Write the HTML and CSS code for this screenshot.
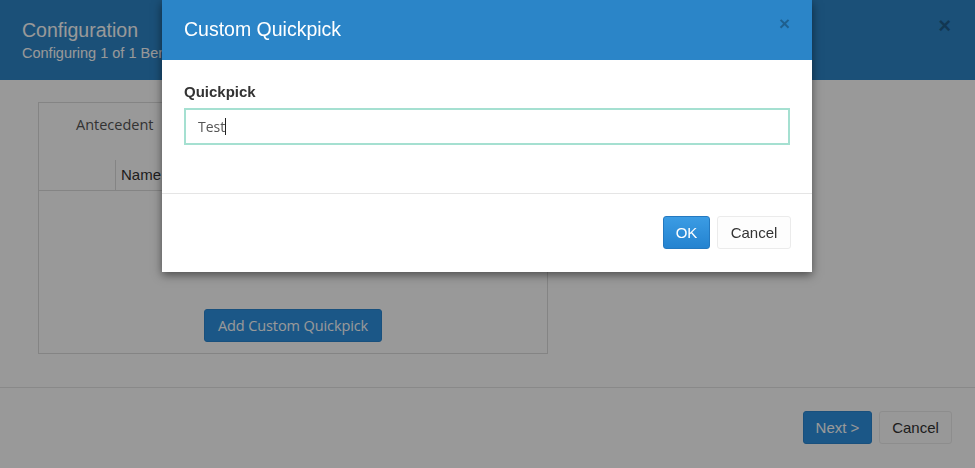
FILE: index.html
```html
<!DOCTYPE html>
<html>
<head>
    <meta charset="utf-8">
    <title>Configuration</title>
    <link rel="stylesheet" href="styles.css">
</head>
<body>
    <div class="page">
        <div class="page-header">
            <div>
                <div class="page-title">Configuration</div>
                <div class="page-subtitle">Configuring 1 of 1 Benefit Rules</div>
            </div>
            <span class="close">&times;</span>
        </div>
        <div class="page-content">
            <div class="panel">
                <div class="panel-tab">Antecedent</div>
                <div class="table-head">
                    <div class="cell-check"></div>
                    <div class="cell-name">Name</div>
                </div>
                <button class="btn btn-primary add-btn">Add Custom Quickpick</button>
            </div>
        </div>
        <div class="page-footer">
            <button class="btn btn-primary btn-next">Next &gt;</button>
            <button class="btn btn-default">Cancel</button>
        </div>
    </div>

    <div class="backdrop"></div>

    <div class="modal">
        <div class="modal-header">
            <span class="modal-title">Custom Quickpick</span>
            <span class="close">&times;</span>
        </div>
        <div class="modal-body">
            <label class="field-label">Quickpick</label>
            <div class="field">Test<span class="caret"></span></div>
        </div>
        <div class="modal-footer">
            <button class="btn btn-ok">OK</button>
            <button class="btn btn-default">Cancel</button>
        </div>
    </div>
</body>
</html>
```

FILE: styles.css
```css
body {
    margin: 0;
    width: 975px;
    height: 468px;
    overflow: hidden;
    background-color: #fff;
    font-family: "Liberation Sans", Arial, sans-serif;
    color: #333;
}
.page {
    display: flex;
    flex-direction: column;
    height: 468px;
}
.page-header {
    height: 80px;
    box-sizing: border-box;
    padding: 18px 22px 0 22px;
    background-color: #2d86c9;
    color: #fff;
    display: flex;
    justify-content: space-between;
    align-items: flex-start;
}
.page-title {
    font-size: 19.5px;
    line-height: 24px;
}
.page-subtitle {
    font-size: 14.5px;
    line-height: 18px;
    margin-top: 2px;
}
.close {
    font-size: 22px;
    font-weight: bold;
    line-height: 16px;
    color: #000;
    opacity: 0.3;
    margin-right: 2px;
}
.page-content {
    padding: 22px 38px 33px 38px;
}
.panel {
    width: 510px;
    height: 252px;
    box-sizing: border-box;
    border: 1px solid #ddd;
    display: flex;
    flex-direction: column;
    padding-bottom: 11px;
}
.panel-tab {
    font-family: "Open Sans", sans-serif;
    font-size: 14.5px;
    line-height: 20px;
    color: #555;
    padding: 12px 0 0 37px;
}
.table-head {
    display: flex;
    margin-top: 25px;
    border-bottom: 1px solid #ddd;
    height: 30px;
}
.cell-check {
    width: 76px;
    border-right: 1px solid #ddd;
}
.cell-name {
    font-size: 15px;
    line-height: 30px;
    padding-left: 5px;
}
.btn {
    height: 33px;
    padding: 0;
    border-radius: 3px;
    border: 1px solid transparent;
    font-family: "Liberation Sans", Arial, sans-serif;
    font-size: 15px;
    white-space: nowrap;
    text-align: center;
    cursor: pointer;
}
.btn-primary {
    background-color: #2e92e2;
    border-color: #2a86d0;
    color: #fff;
}
.btn-default {
    background-color: #fdfdfd;
    border-color: #ebebeb;
    color: #333;
}
.add-btn {
    align-self: center;
    margin-top: auto;
    font-family: "Open Sans", sans-serif;
    font-size: 14.5px;
    letter-spacing: -0.1px;
    width: 178px;
}
.page-footer {
    border-top: 1px solid #e5e5e5;
    padding: 23px 23px;
    display: flex;
    justify-content: flex-end;
    gap: 7px;
}
.btn-next {
    width: 69px;
}
.page-footer .btn-default {
    width: 73px;
}

/* dimmed page behind the dialog */
.backdrop {
    position: fixed;
    top: 0;
    left: 0;
    right: 0;
    bottom: 0;
    background-color: rgba(0, 0, 0, 0.4);
}
.modal {
    position: absolute;
    left: 162px;
    top: 0;
    width: 650px;
    background-color: #fff;
    box-shadow: 0 3px 9px rgba(0, 0, 0, 0.5);
}
.modal-header {
    height: 60px;
    box-sizing: border-box;
    padding: 0 22px;
    background-color: #2b85c8;
    display: flex;
    justify-content: space-between;
    align-items: center;
}
.modal-title {
    color: #fff;
    font-size: 19.5px;
    line-height: 24px;
    margin-top: -2px;
}
.modal-header .close {
    font-size: 19px;
    opacity: 0.28;
    margin-top: -12px;
    margin-right: 0;
}
.modal-body {
    padding: 22px 22px 48px 22px;
    border-bottom: 1px solid #e5e5e5;
}
.field-label {
    display: block;
    font-weight: bold;
    font-size: 15px;
    line-height: 20px;
    margin-bottom: 6px;
}
.field {
    height: 37px;
    box-sizing: border-box;
    border: 2px solid #a5e0d1;
    padding: 0 12px;
    font-family: "Open Sans", sans-serif;
    font-size: 14px;
    color: #555;
    display: flex;
    align-items: center;
}
.caret {
    display: inline-block;
    width: 1px;
    height: 17px;
    background-color: #222;
}
.modal-footer {
    padding: 22px 21px 23px 21px;
    display: flex;
    justify-content: flex-end;
    gap: 7px;
}
.btn-ok {
    width: 47px;
    color: #fff;
    background: linear-gradient(#3b9ce4, #2483d0);
    border-color: #2479c0;
}
.modal-footer .btn-default {
    width: 74px;
}
```
